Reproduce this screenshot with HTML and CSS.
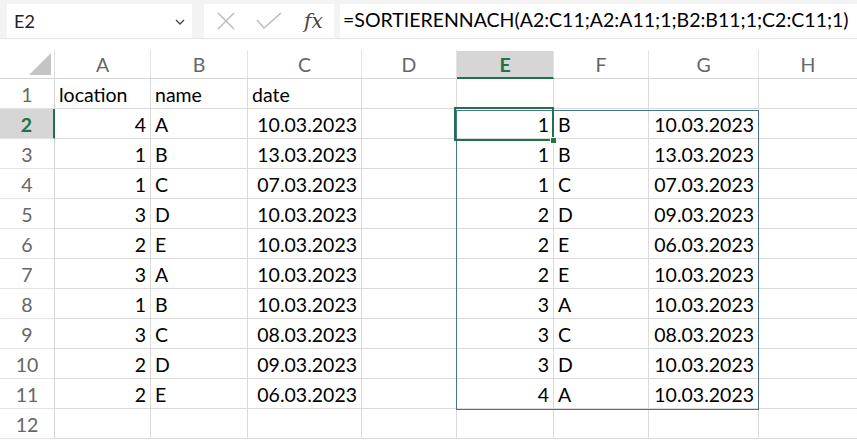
FILE: index.html
```html
<!DOCTYPE html>
<html lang="de">
<head>
    <meta charset="UTF-8">
    <title>Tabelle</title>
    <link rel="stylesheet" href="styles.css">
</head>
<body>
<div class="toolbar">
    <div class="nameBox">
        <span>E2</span>
        <svg class="chevron" width="10" height="6" viewBox="0 0 10 6"><path d="M1 1 L5 5 L9 1" fill="none" stroke="#444" stroke-width="1.3"/></svg>
    </div>
    <div class="fxBox">
        <svg width="20" height="20" viewBox="0 0 20 20"><path d="M2 2 L18 18 M18 2 L2 18" stroke="#b9b9b9" stroke-width="1.4" fill="none"/></svg>
        <svg width="26" height="20" viewBox="0 0 26 20"><path d="M1 9 L8 17 L25 2" stroke="#b9b9b9" stroke-width="1.4" fill="none"/></svg>
        <span class="fx">fx</span>
    </div>
    <div class="formula">=SORTIERENNACH(A2:C11;A2:A11;1;B2:B11;1;C2:C11;1)</div>
</div>

<div class="sheetWrap">
    <div class="sheet" id="sheet"></div>
    <div class="selRange"></div>
    <div class="activeCell"><i class="handle"></i></div>
</div>

<script src="app.js"></script>
</body>
</html>
```

FILE: app.js
```js
var sheet = document.getElementById('sheet');
var cols = ['A','B','C','D','E','F','G','H'];
// Zeilen: [A, B, C, E, F, G]
var data = [
    ['location','name','date','','',''],
    [4,'A','10.03.2023',1,'B','10.03.2023'],
    [1,'B','13.03.2023',1,'B','13.03.2023'],
    [1,'C','07.03.2023',1,'C','07.03.2023'],
    [3,'D','10.03.2023',2,'D','09.03.2023'],
    [2,'E','10.03.2023',2,'E','06.03.2023'],
    [3,'A','10.03.2023',2,'E','10.03.2023'],
    [1,'B','10.03.2023',3,'A','10.03.2023'],
    [3,'C','08.03.2023',3,'C','08.03.2023'],
    [2,'D','09.03.2023',3,'D','10.03.2023'],
    [2,'E','06.03.2023',4,'A','10.03.2023'],
    ['','','','','','']
];

var str = '<div class="corner"><i></i></div>';
for(var c = 0;c<cols.length;c++){
    str += '<div class="colHead' + (cols[c]==='E'?' on':'') + '">' + cols[c] + '</div>';
}
for(var r = 0;r<data.length;r++){
    var row = data[r];
    str += '<div class="rowHead' + (r===1?' on':'') + '">' + (r+1) + '</div>';
    var vals = [row[0],row[1],row[2],'',row[3],row[4],row[5],''];
    for(var k = 0;k<vals.length;k++){
        var v = vals[k];
        var cls = 'cell';
        if(typeof v === 'number' || /^\d\d\.\d\d\.\d{4}$/.test(v)) cls += ' num';
        str += '<div class="' + cls + '">' + v + '</div>';
    }
}
sheet.innerHTML = str;
```

FILE: styles.css
```css
*{
    margin:0;
    padding:0;
    box-sizing:border-box;
}
body{
    width:857px;
    height:441px;
    overflow:hidden;
    background:#fff;
    font-family:Lato,"Noto Sans",sans-serif;
    color:#000;
}
.toolbar{
    display:flex;
    align-items:center;
    gap:12px;
    height:39px;
    padding:4px 0 1px 7px;
    background:#f3f3f3;
    border-bottom:1px solid #e3e3e3;
}
.nameBox,.fxBox,.formula{
    height:34px;
    background:#fff;
    display:flex;
    align-items:center;
}
.nameBox{
    width:185px;
    padding:0 7px;
    justify-content:space-between;
    font-size:18px;
    color:#222;
}
.nameBox .chevron{
    margin-top:2px;
}
.fxBox{
    width:130px;
    padding:0 10px 0 12px;
    gap:20px;
}
.fxBox .fx{
    font-family:"DejaVu Serif","Liberation Serif",serif;
    font-style:italic;
    font-size:20px;
    color:#444;
    margin-left:2px;
}
.formula{
    flex:1;
    padding:0 0 2px 3px;
    margin-left:-6px;
    font-size:19.5px;
    white-space:nowrap;
    overflow:hidden;
}

.sheetWrap{
    position:relative;
    padding-top:11px;
}
.sheet{
    display:grid;
    grid-template-columns:55px 96px 97px 114px 95px 97px 95px 110px 99px;
    grid-template-rows:29px repeat(12,30px);
    font-size:19.5px;
}
.corner{
    position:relative;
    border-right:1px solid #e1e1e1;
    border-bottom:1px solid #d4d4d4;
}
.corner i{
    position:absolute;
    right:3px;
    bottom:3px;
    width:0;
    height:0;
    border-style:solid;
    border-width:0 0 22px 22px;
    border-color:transparent transparent #c4c4c4 transparent;
}
.colHead{
    display:flex;
    align-items:center;
    justify-content:center;
    color:#666;
    border-right:1px solid #e3e3e3;
    border-bottom:1px solid #d4d4d4;
}
.colHead.on{
    background:#d6d6d6;
    color:#217346;
    font-weight:bold;
    border-bottom:2px solid #217346;
    margin-top:1px;
}
.sheet .colHead:last-child{
    border-right:none;
}
.rowHead{
    display:flex;
    align-items:flex-end;
    justify-content:center;
    padding-bottom:2px;
    color:#666;
    border-right:1px solid #d4d4d4;
    border-bottom:1px solid #e3e3e3;
}
.rowHead.on{
    background:#d6d6d6;
    color:#217346;
    font-weight:bold;
    border-right:2px solid #217346;
}
.cell{
    display:flex;
    align-items:flex-end;
    padding:0 4px 2px;
    white-space:nowrap;
    border-right:1px solid #dadada;
    border-bottom:1px solid #dadada;
}
.cell.num{
    justify-content:flex-end;
}

.selRange{
    position:absolute;
    left:456px;
    top:71px;
    width:303px;
    height:300px;
    border:1px solid #4a7196;
}
.activeCell{
    position:absolute;
    left:454px;
    top:68px;
    width:100px;
    height:34px;
    border:2px solid #217346;
}
.activeCell .handle{
    position:absolute;
    right:-5px;
    bottom:-5px;
    width:7px;
    height:7px;
    background:#217346;
    border:1px solid #fff;
}
```
